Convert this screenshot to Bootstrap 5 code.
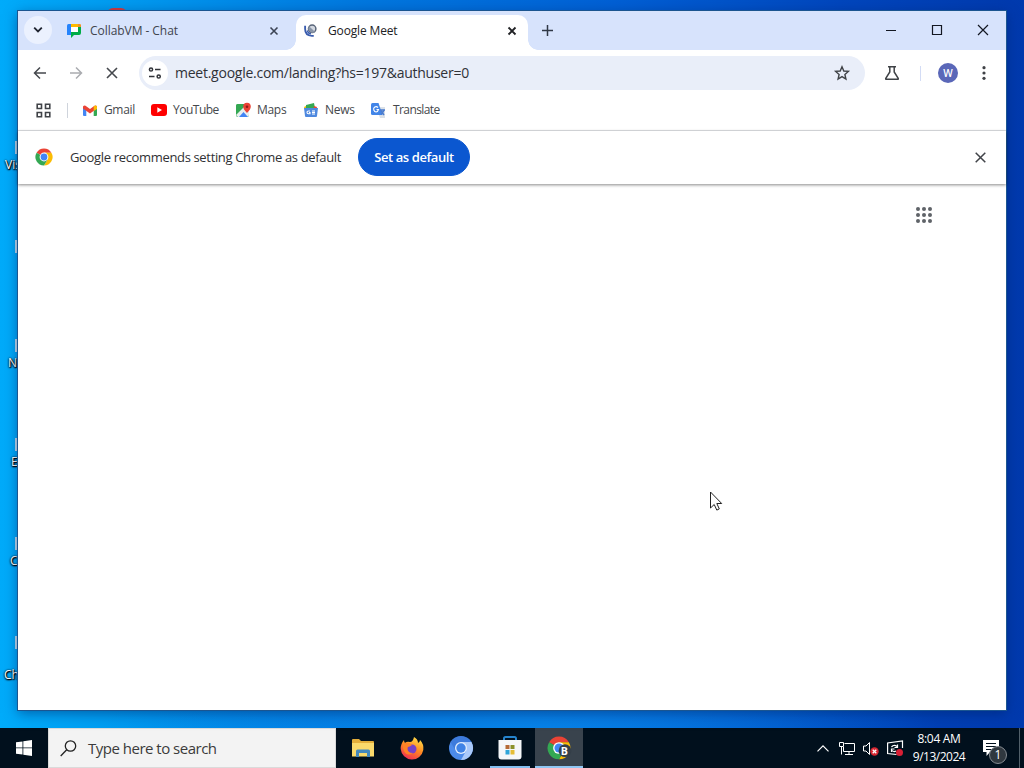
<!DOCTYPE html>
<html lang="en">
<head>
<meta charset="utf-8">
<meta name="viewport" content="width=device-width, initial-scale=1">
<title>Google Meet</title>
<link rel="stylesheet" href="https://cdn.jsdelivr.net/npm/bootstrap@5.3.0/dist/css/bootstrap.min.css">
<style>
body{width:1024px;height:768px;font-family:"Open Sans","Noto Sans",sans-serif;font-size:12px;line-height:18px;color:#3c4043;overflow:hidden}
svg{display:block;flex:none;overflow:visible}
.desktop{height:728px;background:radial-gradient(ellipse 420px 160px at 520px 740px,#0884e8 0,#0884e800 100%),linear-gradient(90deg,#00abfa 0,#009bf0 12%,#0078df 35%,#0060d5 60%,#0046bd 82%,#0039ad 100%)}
.desk-label{left:0;width:40px;color:#fff;font-size:12px;line-height:16px;text-shadow:1px 1px 1px #000,0 1px 2px #000,0 0 2px #000}
.desk-icon{left:15px;width:3px;height:13px;background:#c5ddec}
.red-icon{left:107px;top:8px;width:20px;height:6px;background:#d93a3d;border-radius:10px 10px 0 0}
.window{left:18px;top:11px;width:988px;height:699px;background:#fff;box-shadow:0 0 0 1px #1b5590,0 3px 12px #00206088}
.tabstrip{height:39px;background:#d7e3fc;padding-left:6px}
.tab-search{width:28px;height:28px;background:#ebf1fe;margin-top:5px}
.tab-item{height:35px;margin-top:4px;padding-bottom:4px;font-size:12px}
.tab-idle{width:243px;padding-left:15px;padding-right:17px;color:#40444d}
.tab-live{width:232px;background:#fff;border-radius:10px 10px 0 0;padding-left:8px;padding-right:12px;color:#202124;margin-left:1px}
.tab-live::before,.tab-live::after{content:"";position:absolute;bottom:0;width:10px;height:10px}
.tab-live::before{left:-10px;background:radial-gradient(circle at 0 0,#0000 9.5px,#fff 10px)}
.tab-live::after{right:-10px;background:radial-gradient(circle at 100% 0,#0000 9.5px,#fff 10px)}
.toolbar{height:46px;padding-left:14px}
.omnibox{width:726px;height:34px;background:#e9eef9;border-radius:17px;padding-left:3px}
.site-info{width:26px;height:26px;background:#fff}
.url{font-size:14px;color:#303238;margin-left:7px}
.avatar{width:20px;height:20px;background:#5a67b8;color:#fff;font-size:10px;font-weight:600}
.bookmarks{height:35px;padding-left:18px;padding-bottom:6px;border-bottom:1px solid #e1e3e6;color:#45484c;font-size:12px}
.vline{width:1px;height:15px;background:#cfd4dc}
.infobar{height:53px;font-size:13px;color:#303134;padding-left:17px;box-shadow:0 1px 3px #0007;padding-right:20px;padding-bottom:1px}
.btn-default-browser{--bs-btn-bg:#0b57d0;--bs-btn-color:#fff;--bs-btn-border-color:#0b57d0;width:112px;height:38px;font-size:13px;font-weight:600;padding:0;line-height:18px;margin-left:17px}
.content{padding:23px 74px 0 0}
.pointer-arrow{left:710px;top:491px}
.taskbar{height:40px;background:#01101d;color:#fff}
.start{width:48px}
.searchbox{width:288px;background:#f3f3f3;border:1px solid #dadada;color:#3b3b3b;font-size:15px}
.task-app{width:49px;height:40px}
.task-on{border-bottom:2px solid #83bff0}
.task-now{width:48px;background:#39434d;border-bottom:2px solid #8fc6f3}
.clock{font-size:12px;line-height:18px;width:60px}
.count{left:989px;top:746px;width:18px;height:18px;border:1px solid #858b91;background:#30383f;color:#fff;font-size:12px;line-height:16px}
.fit{white-space:nowrap;display:inline-block}
</style>
</head>
<body class="m-0">
<div class="desktop position-relative">
  <div class="red-icon position-absolute"></div>
  <div class="desk-icon position-absolute" style="top:141px"></div><div class="desk-label position-absolute" style="top:157px;padding-left:5px">Visual</div>
  <div class="desk-icon position-absolute" style="top:240px"></div>
  <div class="desk-icon position-absolute" style="top:339px"></div><div class="desk-label position-absolute ps-2" style="top:355px">New</div>
  <div class="desk-icon position-absolute" style="top:438px"></div><div class="desk-label position-absolute" style="top:454px;padding-left:11px">Ed</div>
  <div class="desk-icon position-absolute" style="top:537px"></div><div class="desk-label position-absolute" style="top:553px;padding-left:10px">Ch</div>
  <div class="desk-icon position-absolute" style="top:636px"></div><div class="desk-label position-absolute ps-1" style="top:667px">Chr</div>

  <main class="window position-absolute">
    <div class="tabstrip d-flex">
      <div class="tab-search rounded-circle d-flex align-items-center justify-content-center">
        <svg width="10" height="6" viewBox="0 0 10 6" fill="none" stroke="#1f2430" stroke-width="1.8"><path d="M1.200 .7 5 4.500 8.800.7"/></svg>
      </div>
      <div class="tab-item tab-idle d-flex align-items-center">
        <svg width="14" height="14" viewBox="0 0 14 14"><path fill="#2684fc" d="M1.500 0H4v11H0V1.500Q0 0 1.500 0Z"/><path fill="#ffba00" d="M4 0h8.500Q14 0 14 1.500V3H4Z"/><path fill="#00ac47" d="M11 3h3v6q0 2-2 2H7l-3 3V8h7Z"/><path fill="#fff" d="M4 3h7v5H4Z"/><path fill="#f0902c" d="M11 0h1.500Q14 0 14 1.500V3h-3Z"/></svg>
        <span class="fit" style="margin-left:9px;letter-spacing:-.05px">CollabVM - Chat</span>
        <svg class="ms-auto" width="8" height="8" viewBox="0 0 8 8" stroke="#3c4454" stroke-width="1.600"><path d="M.5.5l7 7m0-7-7 7"/></svg>
      </div>
      <div class="tab-item tab-live position-relative d-flex align-items-center">
        <svg width="13" height="13" viewBox="0 0 14 14" fill="none"><circle cx="8.800" cy="5.200" r="4" fill="#d3d8e0" stroke="#596579" stroke-width="1.600"/><path d="M5.500 2.500 12 8.500A4.500 4.500 0 0 1 5.500 2.500Z" fill="#8995a8"/><path d="M1.200 2v3.500q0 7 7.300 7.300h2" stroke="#3a5cae" stroke-width="2"/><path d="M3.500 7q.8 3.200 4 3.700" stroke="#3a5cae" stroke-width="1.300"/></svg>
        <span class="fit" style="margin-left:11px;letter-spacing:-.15px">Google Meet</span>
        <svg class="ms-auto" width="8" height="8" viewBox="0 0 8 8" stroke="#202124" stroke-width="1.800"><path d="M.5.5l7 7m0-7-7 7"/></svg>
      </div>
      <svg style="margin:14px 0 0 14px" width="11" height="11" viewBox="0 0 11 11" stroke="#303846" stroke-width="1.500"><path d="M5.500 0v11M0 5.500h11"/></svg>
      <div class="ms-auto d-flex" style="gap:36px;margin-top:14px;padding-right:18px">
        <svg width="10" height="10" viewBox="0 0 10 10" stroke="#131722"><path d="M0 5.500h10"/></svg>
        <svg width="10" height="10" viewBox="0 0 10 10" fill="none" stroke="#131722" stroke-width="1.200"><path d="M.5.5h9v9h-9Z"/></svg>
        <svg width="10" height="10" viewBox="0 0 10 10" stroke="#131722" stroke-width="1.200"><path d="m0 0 10 10M10 0 0 10"/></svg>
      </div>
    </div>

    <div class="toolbar d-flex align-items-center">
      <svg width="16" height="16" viewBox="0 0 16 16" fill="none" stroke="#45484d" stroke-width="1.500"><path d="M14 8H3M8 2.500 2.500 8 8 13.500"/></svg>
      <svg style="margin-left:20px" width="16" height="16" viewBox="0 0 16 16" fill="none" stroke="#aaacb0" stroke-width="1.500"><path d="M2 8h11M8 2.500 13.500 8 8 13.500"/></svg>
      <svg style="margin-left:23px" width="10" height="10" viewBox="0 0 10 10" stroke="#45484d" stroke-width="1.600"><path d="m0 0 10 10M10 0 0 10"/></svg>
      <div class="omnibox d-flex align-items-center" style="margin-left:22px">
        <div class="site-info rounded-circle d-flex align-items-center justify-content-center">
          <svg width="14" height="12" viewBox="0 0 14 12" fill="none" stroke="#303238" stroke-width="1.500"><circle cx="3" cy="2.500" r="1.600"/><path d="M7 2.500h5.500M1 9.500h5.500"/><circle cx="10.700" cy="9.500" r="1.600"/></svg>
        </div>
        <span class="url fit" style="letter-spacing:-.25px">meet.google.com/landing?hs=197&amp;authuser=0</span>
        <svg class="ms-auto" style="margin-right:15px" width="16" height="16" viewBox="0 0 16 16" fill="none" stroke="#3f4246" stroke-width="1.400"><path d="m8 1.700 1.800 4.300 4.600.4-3.500 3.100 1 4.500L8 11.600 4.100 14l1-4.500-3.500-3.100 4.600-.4Z"/></svg>
      </div>
      <svg style="margin-left:19px" width="16" height="16" viewBox="0 0 16 16" fill="none" stroke="#3f4246" stroke-width="1.500"><path d="M4 1.700h8M5.800 2v5L1.800 13.300q-.4 1 .6 1h11.200q1 0 .6-1L10.200 7V2"/></svg>
      <div class="vline" style="margin-left:20px;background:#d3dcf5"></div>
      <div class="avatar rounded-circle d-flex align-items-center justify-content-center" style="margin-left:17px">W</div>
      <svg style="margin-left:24px" width="4" height="14" viewBox="0 0 4 14" fill="#3f4246"><circle cx="2" cy="1.700" r="1.600"/><circle cx="2" cy="7" r="1.600"/><circle cx="2" cy="12.300" r="1.600"/></svg>
    </div>

    <div class="bookmarks d-flex align-items-center">
      <svg width="15" height="15" viewBox="0 0 15 15" fill="none" stroke="#404348" stroke-width="1.600"><path d="M1.200 1.200h4.300v4.300H1.200Zm8.300 0h4.300v4.300H9.500ZM1.200 9.500h4.300v4.300H1.200Zm8.300 0h4.300v4.300H9.500Z"/></svg>
      <div class="vline" style="margin-left:16px"></div>
      <svg style="margin-left:15px" width="14" height="11" viewBox="0 0 14 11"><path fill="#4285f4" d="M0 2v8q0 1 1 1h2.300V4Z"/><path fill="#34a853" d="M14 2v8q0 1-1 1h-2.300V4Z"/><path fill="#ea4335" d="M0 1.500Q1 0 2.500.7L7 4 11.500.7Q13 0 14 1.500V3.500L7 8.500 0 3.500Z"/><path fill="#fbbc04" d="M10.700 1.200Q13.500-.5 14 1.700V4l-3.300 2Z"/></svg>
      <span class="fit" style="margin-left:7px;width:47px;letter-spacing:-.35px">Gmail</span>
      <svg width="16" height="12" viewBox="0 0 16 12"><rect width="16" height="12" rx="3" fill="#f00"/><path fill="#fff" d="m6.300 3.200 4.700 2.800-4.700 2.800Z"/></svg>
      <span class="fit" style="margin-left:6px;width:63px;letter-spacing:-.5px">YouTube</span>
      <svg width="15" height="15" viewBox="0 0 15 15"><rect y="1" width="13" height="13" rx="2" fill="#34a853"/><path fill="#e9eeef" d="M0 12 9 3l4 4v5q0 2-2 2H2Z"/><path fill="#4285f4" d="m3 14 4.500-5 4.500 5Z"/><path fill="#34a853" d="M0 3q0-2 2-2h5L0 9Z"/><path fill="#ea4335" d="M11 10Q7 6 7.200 3.500a3.800 3.800 0 0 1 7.600 0Q15 6 11 10Z"/><circle cx="11" cy="3.800" r="1.300" fill="#8e1c16"/></svg>
      <span class="fit" style="margin-left:6px;width:47px;letter-spacing:-.3px">Maps</span>
      <svg width="14" height="14" viewBox="0 0 14 14"><path fill="#34a853" d="m2 2 8-2 1 5H2Z"/><path fill="#ea4335" d="m10 3 3 1-1 4H9Z"/><path fill="#fbbc04" d="m0 4 2-1v4H1Z"/><path fill="#4e88df" d="M0 5h14l-1 8q0 1-1 1H2q-1 0-1-1Z"/><path fill="none" stroke="#fff" stroke-width="1.100" d="M6 8H4.500Q3 8 3 9.300t1.500 1.500H6V9.500H5M8 8h3M8 9.500h3M8 11h3"/></svg>
      <span class="fit" style="margin-left:7px;width:46px;letter-spacing:-.3px">News</span>
      <svg width="15" height="15" viewBox="0 0 15 15"><path fill="#dbe1e8" d="M5 4h9v11H9Z"/><path fill="#4285e8" d="M1.500 0h6l4 12h-10Q0 12 0 10.500v-9Q0 0 1.500 0Z"/><path fill="none" stroke="#fff" stroke-width="1.100" d="M7 4.500Q5.500 3 3.800 4t-1 3 2.300 2T7.500 6.500h-2"/><path fill="none" stroke="#497bce" stroke-width="1.500" d="M9 7h5m-1 0q-1 3-3 4m0-3 3 4"/></svg>
      <span class="fit" style="margin-left:7px;letter-spacing:-.6px">Translate</span>
    </div>

    <div class="infobar d-flex align-items-center">
      <svg width="18" height="18" viewBox="0 0 18 18"><circle cx="9" cy="9" r="8.500" fill="#fff"/><path fill="#ea4335" d="M9 9 1.600 4.700A8.500 8.500 0 0 1 16.400 4.700H9Z"/><path fill="#fbbc04" d="M9 4.700h7.400A8.500 8.500 0 0 1 9 17.500l3.700-6.300Z"/><path fill="#34a853" d="M1.600 4.700A8.500 8.500 0 0 0 9 17.500l3.700-6.300L9 9Z"/><circle cx="9" cy="9" r="4.400" fill="#fff"/><circle cx="9" cy="9" r="3.400" fill="#4285f4"/></svg>
      <span class="fit" style="margin-left:17px;width:271px;letter-spacing:-.34px">Google recommends setting Chrome as default</span>
      <button class="btn btn-default-browser rounded-pill text-nowrap" style="letter-spacing:-.4px">Set as default</button>
      <svg class="ms-auto" width="11" height="11" viewBox="0 0 11 11" stroke="#404348" stroke-width="1.500"><path d="m.7.7 9.600 9.600m0-9.600L.7 10.300"/></svg>
    </div>

    <div class="content d-flex justify-content-end">
      <svg width="16" height="16" viewBox="0 0 16 16" fill="#5f6368"><circle cx="2" cy="2" r="2"/><circle cx="8" cy="2" r="2"/><circle cx="14" cy="2" r="2"/><circle cx="2" cy="8" r="2"/><circle cx="8" cy="8" r="2"/><circle cx="14" cy="8" r="2"/><circle cx="2" cy="14" r="2"/><circle cx="8" cy="14" r="2"/><circle cx="14" cy="14" r="2"/></svg>
    </div>
  </main>
  <svg class="pointer-arrow position-absolute" width="12" height="20" viewBox="0 0 12 20"><path fill="#fff" stroke="#222" d="M.5 1v16l3.700-3.500 2.600 5.600 2.500-1.200L6.800 12.500h4.900Z"/></svg>
</div>

<footer class="taskbar d-flex align-items-stretch">
  <div class="start d-flex align-items-center justify-content-center">
    <svg width="16" height="16" viewBox="0 0 16 16" fill="#fff"><path d="M0 2.300 6.500 1.400V7.500H0ZM7.300 1.300 16 0v7.500H7.300ZM0 8.300h6.500v6.200L0 13.700ZM7.300 8.300H16V16l-8.700-1.300Z"/></svg>
  </div>
  <div class="searchbox d-flex align-items-center">
    <svg style="margin-left:11px" width="17" height="17" viewBox="0 0 17 17" fill="none" stroke="#222" stroke-width="1.300"><circle cx="10.500" cy="6" r="5.200"/><path d="M6.700 9.800.7 16"/></svg>
    <span class="fit" style="margin-left:11px;letter-spacing:-.5px">Type here to search</span>
  </div>
  <div class="d-flex" style="margin-left:2px">
    <div class="task-app d-flex align-items-center justify-content-center">
      <svg width="22" height="18" viewBox="0 0 22 18"><path fill="#e3ae3b" d="M0 1q0-1 1-1h6l2 2h12q1 0 1 1v14H0Z"/><path fill="#f9d96c" d="M0 4h22v13.500H0Z"/><path fill="#4388bd" d="M4 18v-6q0-1.500 1.500-1.500h11Q18 10.500 18 12v6h-3v-4H7v4Z"/></svg>
    </div>
    <div class="task-app d-flex align-items-center justify-content-center">
      <svg width="24" height="24" viewBox="0 0 24 24"><defs><linearGradient id="flame" x1=".8" y1="0" x2=".3" y2="1"><stop stop-color="#ffe34a"/><stop offset=".5" stop-color="#ff8a22"/><stop offset="1" stop-color="#f02c54"/></linearGradient></defs><path fill="url(#flame)" d="M14 1q4 2 4 6 2-1 2-3 4 4 3.300 10A11.400 11.400 0 0 1 .7 13Q.5 8 4 4q0 2 1 3 2-2 5-1 3 0 4-5Z"/><circle cx="12" cy="13" r="4.500" fill="#7542c8"/><path fill="#ff8226" d="M4 7q5-1 8 2-2 2-5 2 0 6 6 6-6 4-9-2-2-4 0-8Z"/></svg>
    </div>
    <div class="task-app d-flex align-items-center justify-content-center">
      <svg width="24" height="24" viewBox="0 0 24 24"><circle cx="12" cy="12" r="12" fill="#4c8bea"/><path fill="#a9c9fa" d="M12 6h10.400A12 12 0 0 1 12 24l5-9Z"/><path fill="#2c68cd" d="M1.600 6Q5 0 12 0t10.400 6H12a6 6 0 0 0-5.200 9Z" opacity=".45"/><circle cx="12" cy="12" r="6" fill="#e2edfc"/><circle cx="12" cy="12" r="4.700" fill="#3f83e6"/></svg>
    </div>
    <div class="task-app d-flex justify-content-center">
      <div class="task-on d-flex align-items-center justify-content-center" style="width:40px">
        <svg style="margin-top:2px" width="24" height="24" viewBox="0 0 24 24"><path fill="none" stroke="#2584ce" stroke-width="2" d="M6 6V2.500Q6 1 7.500 1h9Q18 1 18 2.500V6"/><path fill="#f5f7f9" d="M.5 4h23v16.500q0 3-3 3h-17q-3 0-3-3Z"/><path fill="#b56a37" d="M7.500 9h4v4h-4Z"/><path fill="#8b912a" d="M12.500 9h4v4h-4Z"/><path fill="#2fa5d9" d="M7.500 14h4v4.500h-4Z"/><path fill="#e5bd35" d="M12.500 14h4v4.500h-4Z"/></svg>
      </div>
    </div>
    <div class="task-app task-now d-flex align-items-center justify-content-center" style="margin-left:1px">
      <svg style="margin-top:2px" width="24" height="24" viewBox="0 0 18 18"><path fill="#ea4335" d="M9 9 1.600 4.700A8.500 8.500 0 0 1 16.400 4.700H9Z"/><path fill="#fbbc04" d="M9 4.700h7.400A8.500 8.500 0 0 1 9 17.500l3.700-6.300Z"/><path fill="#34a853" d="M1.600 4.700A8.500 8.500 0 0 0 9 17.500l3.700-6.300L9 9Z"/><circle cx="9" cy="9" r="4.400" fill="#fff"/><circle cx="9" cy="9" r="3.400" fill="#4285f4"/><circle cx="13.500" cy="11" r="4.800" fill="#353f49"/><text x="13" y="14" text-anchor="middle" font-size="8" font-weight="700" fill="#fff">B</text></svg>
    </div>
  </div>
  <div class="ms-auto d-flex align-items-center">
    <svg width="12" height="7" viewBox="0 0 12 7" fill="none" stroke="#fff" stroke-width="1.200"><path d="M.5 6.300 6 .8l5.500 5.500"/></svg>
    <svg style="margin-left:10px" width="16" height="15" viewBox="0 0 16 15" fill="none" stroke="#fff"><path d="M5.500 2.500h10v8H4.500V6M.5 1.500h4v4h-4ZM2.500 5.500v8M10 10.500v3M6 13.500h8"/></svg>
    <svg style="margin-left:8px" width="16" height="15" viewBox="0 0 16 15" fill="none" stroke="#fff"><path d="M.5 5v5H3l3.500 3.500v-12L3 5Z"/><circle cx="11.500" cy="10.500" r="4.200" fill="#d72631" stroke="none"/><path d="m9.700 8.700 3.600 3.600m0-3.600-3.600 3.600" stroke-width="1.300"/></svg>
    <svg style="margin-left:8px" width="16" height="16" viewBox="0 0 16 16" fill="none" stroke="#fff" stroke-width="1.200"><path d="M15.500 8V1L.6 3v10.500l9 1M4.500 7q2.500-3 5.500-.5m.5-2v3h-3M4.500 12V9h3m-3 1q2 2.500 4.500 1"/><circle cx="12.500" cy="12.500" r="3.500" fill="#d91f35" stroke="none"/></svg>
    <div class="clock text-center" style="margin-left:6px"><span class="fit" style="letter-spacing:-.3px">8:04 AM</span><br><span class="fit" style="letter-spacing:-.5px">9/13/2024</span></div>
    <svg style="margin-left:14px;margin-right:20px" width="16" height="16" viewBox="0 0 16 16"><path fill="#fff" d="M0 0h16v12H7l-3.500 4v-4H0Z"/><path d="M3 3.500h10M3 6.500h10M3 9.500h7" stroke="#01101d" stroke-width="1.200"/></svg>
    <div style="width:5px;height:40px;border-left:1px solid #52606a"></div>
  </div>
  <div class="count position-absolute rounded-circle text-center">1</div>
</footer>
<script src="https://cdn.jsdelivr.net/npm/bootstrap@5.3.0/dist/js/bootstrap.bundle.min.js"></script>
</body>
</html>
